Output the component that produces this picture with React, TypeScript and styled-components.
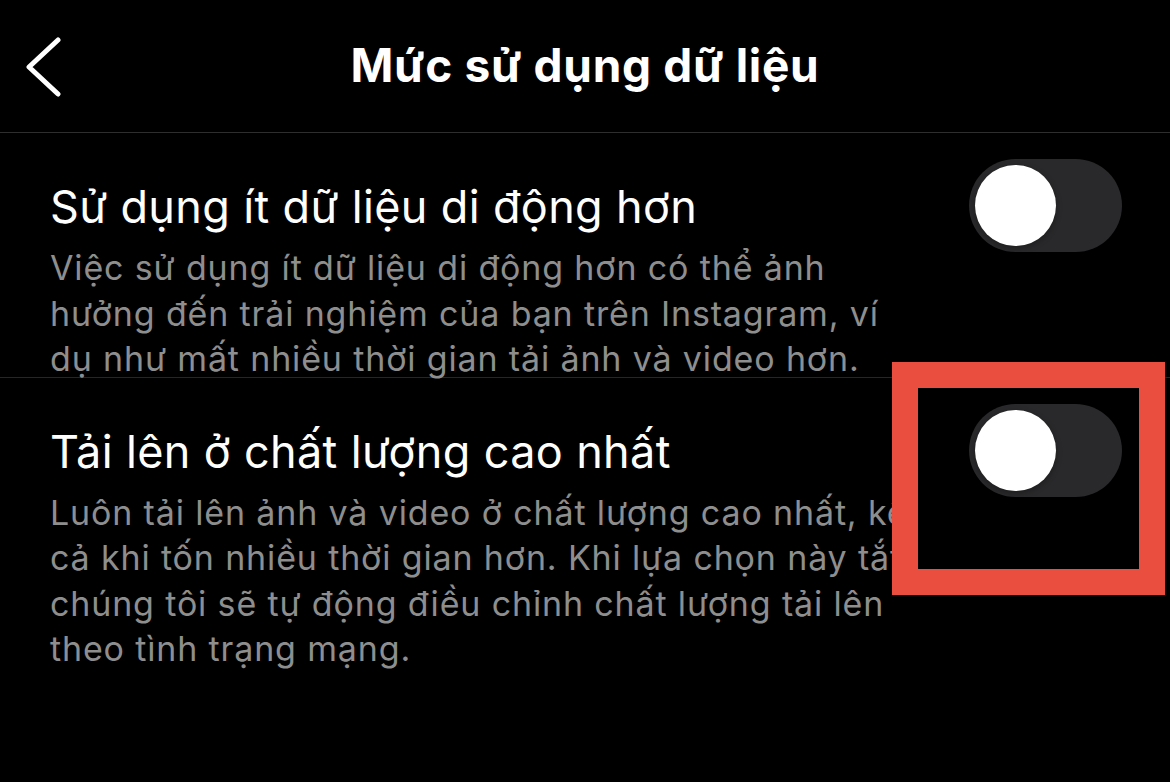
import React, { useState } from "react";
import styled, { createGlobalStyle } from "styled-components";

const GlobalStyle = createGlobalStyle`
  html, body {
    margin: 0;
    padding: 0;
    background: #000;
  }
  body {
    font-family: Inter, "Noto Sans", "DejaVu Sans", sans-serif;
    color: #fff;
  }
`;

const SETTINGS = [
  {
    id: "less-data",
    title: "Sử dụng ít dữ liệu di động hơn",
    lines: [
      "Việc sử dụng ít dữ liệu di động hơn có thể ảnh",
      "hưởng đến trải nghiệm của bạn trên Instagram, ví",
      "dụ như mất nhiều thời gian tải ảnh và video hơn.",
    ],
  },
  {
    id: "hq-upload",
    title: "Tải lên ở chất lượng cao nhất",
    lines: [
      "Luôn tải lên ảnh và video ở chất lượng cao nhất, kể",
      "cả khi tốn nhiều thời gian hơn. Khi lựa chọn này tắt,",
      "chúng tôi sẽ tự động điều chỉnh chất lượng tải lên",
      "theo tình trạng mạng.",
    ],
  },
];

const App: React.FC = () => {
  const [values, setValues] = useState<Record<string, boolean>>({});
  const toggle = (id: string) => setValues((prev) => ({ ...prev, [id]: !prev[id] }));

  return (
    <Page>
      <GlobalStyle />
      <Header>
        <BackButton aria-label="Quay lại">
          <svg width="40" height="64" viewBox="0 0 40 64" fill="none">
            <path
              d="M32 6 L3 33 L32 60"
              stroke="#fff"
              strokeWidth="5"
              strokeLinecap="round"
              strokeLinejoin="round"
            />
          </svg>
        </BackButton>
        <Title>Mức sử dụng dữ liệu</Title>
      </Header>
      {SETTINGS.map((item, i) => (
        <Row key={item.id} divider={i > 0}>
          <TextCol>
            <RowTitle>{item.title}</RowTitle>
            <Description>
              {item.lines.map((line) => (
                <Line key={line}>{line}</Line>
              ))}
            </Description>
          </TextCol>
          <Switch on={!!values[item.id]} onClick={() => toggle(item.id)}>
            <Knob />
          </Switch>
        </Row>
      ))}
      <Highlight />
    </Page>
  );
};

export default App;

const Page = styled.div`
  position: relative;
  width: 1170px;
  height: 782px;
  overflow: hidden;
  background: #000;
`;

const Header = styled.div`
  position: relative;
  height: 132px;
  display: flex;
  align-items: center;
  justify-content: center;
  border-bottom: 1px solid #2e2e2e;
`;

const BackButton = styled.button`
  position: absolute;
  left: 26px;
  top: 34px;
  background: none;
  border: none;
  padding: 0;
  display: flex;
  cursor: pointer;
`;

const Title = styled.h1`
  margin: 0;
  margin-top: -2px;
  font-size: 46px;
  font-weight: 700;
  letter-spacing: 0.7px;
  color: #fff;
`;

const Row = styled.div<{ divider: boolean }>`
  display: flex;
  align-items: flex-start;
  padding: 26px 48px 0 50px;
  border-top: ${({ divider }) => (divider ? "1px solid #262626" : "none")};
`;

const TextCol = styled.div`
  flex: 1;
  min-width: 0;
  padding-top: 20px;
  white-space: nowrap;
`;

const RowTitle = styled.div`
  font-size: 45px;
  line-height: 56px;
  font-weight: 400;
  letter-spacing: 0.35px;
  color: #fff;
`;

const Description = styled.div`
  margin-top: 10px;
  margin-bottom: -5px;
  font-size: 34px;
  line-height: 45.5px;
  letter-spacing: 0.85px;
  color: #8e8e8e;
`;

const Line = styled.div``;

const Switch = styled.button<{ on: boolean }>`
  flex: none;
  width: 153px;
  height: 93px;
  margin-left: 24px;
  padding: 6px;
  border: none;
  border-radius: 47px;
  background: ${({ on }) => (on ? "#34c759" : "#29292b")};
  display: flex;
  justify-content: ${({ on }) => (on ? "flex-end" : "flex-start")};
  align-items: center;
  cursor: pointer;
`;

const Knob = styled.span`
  width: 81px;
  height: 81px;
  border-radius: 50%;
  background: #fff;
  box-shadow: 0 2px 6px rgba(0, 0, 0, 0.3);
`;

const Highlight = styled.div`
  position: absolute;
  left: 892px;
  top: 362px;
  width: 273px;
  height: 233px;
  box-sizing: border-box;
  border: 26px solid #e94e3e;
  pointer-events: none;
`;
